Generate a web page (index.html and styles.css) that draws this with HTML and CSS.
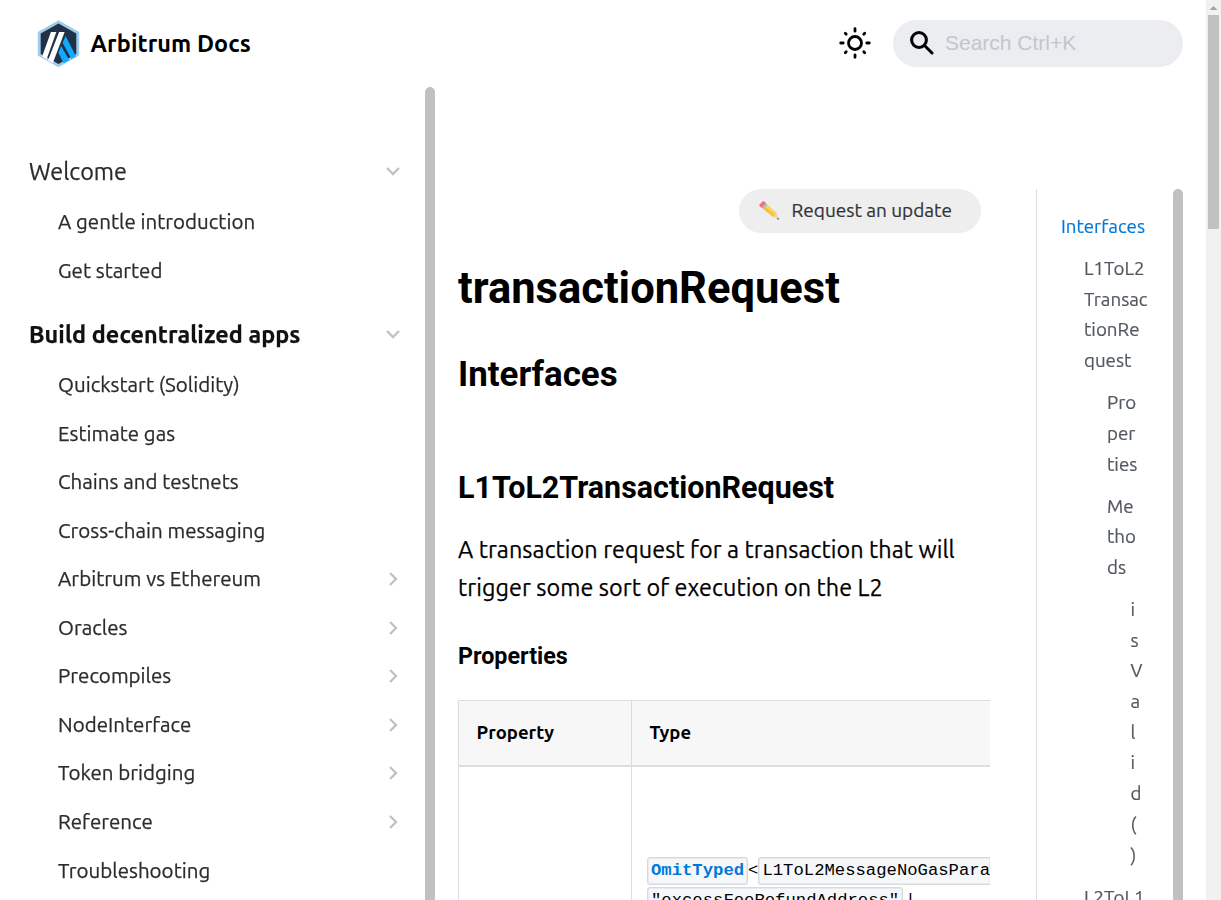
FILE: index.html
```html
<!DOCTYPE html>
<html lang="en">
<head>
<meta charset="utf-8">
<title>transactionRequest | Arbitrum Docs</title>
<link rel="stylesheet" href="styles.css">
</head>
<body>
<div class="window">
  <div class="page">
    <header class="navbar">
      <a class="brand">
        <svg class="logo" width="43" height="48" viewBox="0 0 42 48" preserveAspectRatio="none">
          <path d="M21 .3 41.200 12v23.500L21 47.300.8 35.500V12z" fill="#9dcced"/>
          <path d="M21 3.500 38.400 13.600v20.300L21 44 3.600 33.900V13.600z" fill="#213147"/>
          <path d="M28 16 38 36.300 33.600 38.900 25 22.800z" fill="#12aaff"/>
          <path d="M23.600 26 31.500 40 26 43.200 20.900 32.800z" fill="#12aaff"/>
          <path d="M13.600 12H18.900L9.400 39.300 5 36.500z M21.600 12H27L15.500 43 10.800 40.300z" fill="#fff"/>
        </svg>
        <span>Arbitrum Docs</span>
      </a>
      <div class="tools">
        <svg class="sun" width="34" height="34" viewBox="0 0 34 34" fill="none" stroke="#000" stroke-width="2.8" stroke-linecap="round">
          <circle cx="17" cy="17" r="6.500"/>
          <path d="M17 2.700v2.500M17 28.800v2.500M2.700 17h2.500M28.800 17h2.500M7.300 7.300l.9.900M25.800 25.800l.9.900M7.300 26.700l.9-.9M25.800 8.200l.9-.9"/>
        </svg>
        <div class="search">
          <svg width="24" height="24" viewBox="0 0 24 24" fill="none" stroke="#000" stroke-width="3">
            <circle cx="9" cy="9" r="7.400"/><path d="M14.300 14.300l7.700 7.700" stroke-linecap="round"/>
          </svg>
          <span>Search Ctrl+K</span>
        </div>
      </div>
    </header>
    <div class="columns">
      <nav class="sidebar">
        <div class="menu">
          <div class="group">Welcome<svg class="down" viewBox="0 0 14 14"><path d="M1 4l6 6 6-6"/></svg></div>
          <div class="item">A gentle introduction</div>
          <div class="item">Get started</div>
          <div class="group active">Build decentralized apps<svg class="down" viewBox="0 0 14 14"><path d="M1 4l6 6 6-6"/></svg></div>
          <div class="item">Quickstart (Solidity)</div>
          <div class="item">Estimate gas</div>
          <div class="item">Chains and testnets</div>
          <div class="item">Cross-chain messaging</div>
          <div class="item">Arbitrum vs Ethereum<svg viewBox="0 0 14 14"><path d="M4 1l6 6-6 6"/></svg></div>
          <div class="item">Oracles<svg viewBox="0 0 14 14"><path d="M4 1l6 6-6 6"/></svg></div>
          <div class="item">Precompiles<svg viewBox="0 0 14 14"><path d="M4 1l6 6-6 6"/></svg></div>
          <div class="item">NodeInterface<svg viewBox="0 0 14 14"><path d="M4 1l6 6-6 6"/></svg></div>
          <div class="item">Token bridging<svg viewBox="0 0 14 14"><path d="M4 1l6 6-6 6"/></svg></div>
          <div class="item">Reference<svg viewBox="0 0 14 14"><path d="M4 1l6 6-6 6"/></svg></div>
          <div class="item">Troubleshooting</div>
        </div>
        <div class="thumb"></div>
      </nav>
      <main class="content">
        <div class="actions">
          <a class="update">
            <svg width="22" height="22" viewBox="0 0 22 22">
              <path d="M2 5.100 5.500 1.800 7.300 3.300 3.700 7z" fill="#f2727b" stroke="#f2727b" stroke-width="1.600" stroke-linejoin="round"/>
              <path d="M3.900 7.700 8 3.500 9.600 5 5.300 9.300z" fill="#82c9dc"/>
              <path d="M5.300 9.300 9.600 5 18.800 13.500 15.500 17.300z" fill="#f9bf40"/>
              <path d="M7.500 7.100 9.600 5 18.800 13.500 17.500 15z" fill="#ffd35a"/>
              <path d="M15.500 17.300 18.800 13.500 20.900 19.600z" fill="#f3d7ae"/>
              <path d="M18.600 18.700 20.300 17.400 21.100 20z" fill="#6b6b6b"/>
            </svg>
            <span>Request an update</span>
          </a>
        </div>
        <h1>transactionRequest</h1>
        <h2>Interfaces</h2>
        <h3>L1ToL2TransactionRequest</h3>
        <p>A transaction request for a transaction that will trigger some sort of execution on the L2</p>
        <h4>Properties</h4>
        <div class="table">
          <div class="cell head">Property</div>
          <div class="cell head">Type</div>
          <div class="cell"></div>
          <div class="cell type">
            <div class="line"><code class="link">OmitTyped</code>&lt;<code class="open">L1ToL2MessageNoGasPara</code></div>
            <div class="line"><code>"excessFeeRefundAddress"</code><span class="bar">|</span></div>
          </div>
        </div>
      </main>
      <aside class="toc">
        <div class="toc-list">
          <div class="t1">Interfaces</div>
          <div class="t2">L1ToL2TransactionRequest</div>
          <div class="t3">Properties</div>
          <div class="t3">Methods</div>
          <div class="t4">isValid()</div>
          <div class="t2">L2ToL1</div>
        </div>
        <div class="thumb"></div>
      </aside>
    </div>
  </div>
  <div class="scrollbar"><i class="arrow"></i><i class="handle"></i></div>
</div>
</body>
</html>
```
FILE: styles.css
```css
* { box-sizing: border-box; }
body { margin: 0; overflow: hidden; background: #fff; color: #000; font: 23.4px/1.65 Ubuntu, "Noto Sans", sans-serif; }
svg { display: block; flex: none; }

.window { display: flex; height: 900px; overflow: hidden; }
.page { width: 1206px; flex: none; display: flex; flex-direction: column; }

.scrollbar { width: 15px; flex: none; background: #f1f1f1; display: flex; flex-direction: column; align-items: center; }
.arrow { width: 8px; height: 15px; flex: none; background: #a3a3a3; clip-path: polygon(50% 6px, 100% 10px, 0 10px); }
.handle { width: 11px; height: 214px; background: #c1c1c1; }

.navbar { height: 87px; flex: none; display: flex; align-items: center; justify-content: space-between; padding: 0 23px 0 37px; }
.brand { display: flex; align-items: center; gap: 10.600px; font-weight: 700; letter-spacing: .08px; }
.tools { display: flex; align-items: center; gap: 21px; }
.sun { margin-top: -1px; }
.search { width: 290px; height: 47px; border-radius: 24px; background: #ebedf0; display: flex; align-items: center; gap: 11.500px; padding: 0 0 2px 16.500px; font: 21px "Liberation Sans", Arial, sans-serif; color: #c1c6cd; }

.columns { flex: 1; min-height: 0; display: flex; overflow: hidden; }
.thumb { width: 10px; flex: none; align-self: stretch; background: #c1c1c1; border-radius: 5px 5px 0 0; }

.sidebar { width: 435px; flex: none; display: flex; }
.menu { flex: 1; padding: 59.200px 25px 0 29px; color: #2b2b2b; will-change: transform; -webkit-text-stroke: .25px; }
.menu > div { display: flex; align-items: center; justify-content: space-between; white-space: nowrap; line-height: 1.25; }
.menu svg { width: 14px; height: 14px; fill: none; stroke: #c1c1c1; stroke-width: 2.300; }
.menu .down { margin-top: -1px; }
.group { height: 51.300px; }
.active { margin-top: 14.600px; font-weight: 700; color: #111; letter-spacing: .07px; }
.item { height: 48.570px; padding-left: 29px; font-size: 20.500px; letter-spacing: .02px; }

.content { width: 555px; flex: none; padding: 102px 0 0 23px; overflow: hidden; }
.actions { display: flex; justify-content: flex-end; padding-right: 9px; }
.update { width: 242px; height: 44px; border-radius: 22px; background: #eee; color: #333; display: flex; align-items: center; gap: 11.500px; padding-left: 19px; font-size: 19px; white-space: nowrap; -webkit-text-stroke: .2px; }
h1, h2, h3, h4 { font-family: Roboto, sans-serif; font-weight: 700; line-height: 1.25; margin: 0; white-space: nowrap; }
h1 { font-size: 43.500px; line-height: 54.750px; padding-top: 29px; }
h2 { font-size: 34.900px; line-height: 43.880px; padding-top: 36px; }
h3 { font-size: 30.450px; line-height: 38.130px; padding-top: 72px; }
p { margin: 23px 0 36px; line-height: 38px; letter-spacing: .06px; -webkit-text-stroke: .25px; }
h4 { font-size: 23.300px; line-height: 29.250px; }

.table { margin-top: 29px; display: grid; grid-template-columns: 173px 359px; grid-template-rows: 66px 300px; border-top: 1px solid #dadde1; }
.cell { border-left: 1px solid #dadde1; padding: 0 0 0 17.500px; }
.head { background: #f7f7f7; border-bottom: 2px solid #dadde1; font-size: 18.500px; font-weight: 700; line-height: 63px; }
.cell.type { padding: 89px 0 0 15px; }
.line { font: 17.240px/30px "Liberation Mono", monospace; height: 30px; white-space: pre; }
code { font: inherit; display: inline-block; height: 28px; line-height: 26px; padding: 0 3px; border: 1px solid #d6d9dd; border-radius: 3px; background: #f6f7f8; box-shadow: inset 0 0 0 .5px #dadde1; vertical-align: top; margin-top: 1px; }
.open { padding-right: 0; border-right: 0; border-radius: 3px 0 0 3px; }
.link { color: #0079db; font-weight: 700; }
.bar { padding-left: 2px; }

.toc { margin: 102px 0 0 46px; width: 147px; flex: none; border-left: 1px solid #dadde1; display: flex; overflow: hidden; }
.toc-list { flex: 1; min-width: 0; padding: 23px 0 0 24px; font-size: 18.720px; line-height: 30.700px; color: #525860; overflow-wrap: anywhere; will-change: transform; -webkit-text-stroke: .2px; }
.toc-list > div { box-sizing: content-box; margin-bottom: 11.300px; }
.t1 { color: #0079db; width: 90px; }
.t2 { padding-left: 23px; width: 65.500px; }
.t3 { padding-left: 46px; width: 32px; }
.t4 { padding-left: 69.500px; width: 1px; }
```
